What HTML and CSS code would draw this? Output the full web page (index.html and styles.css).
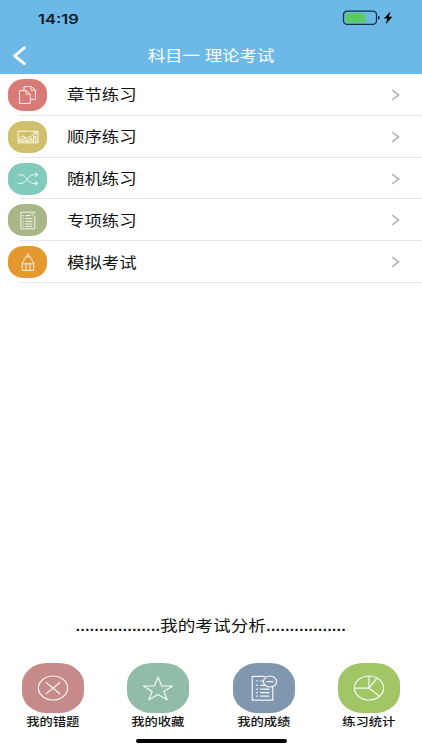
FILE: index.html
```
<!DOCTYPE html>
<html lang="zh-CN">
<head>
    <meta charset="UTF-8">
    <meta name="viewport" content="width=device-width, initial-scale=1.0">
    <title>科目一 理论考试</title>
    <link rel="stylesheet" href="styles.css">
</head>
<body>
    <header class="header">
        <div class="status-bar">
            <span class="time">14:19</span>
            <svg class="battery" width="52" height="16" viewBox="0 0 52 16">
                <rect x="1.5" y="1.2" width="33" height="13.2" rx="3.6" fill="none" stroke="#12303f" stroke-width="1.3"/>
                <rect x="3.5" y="3.2" width="20" height="9.2" rx="1.6" fill="#57cb60"/>
                <path d="M36 5.8q1.8.4 1.8 2t-1.8 2z" fill="#12303f"/>
                <path d="M48.4 1.6l-6.6 7h3.5l-1.6 5.6 6.8-7.4h-3.6z" fill="#000"/>
            </svg>
        </div>
        <div class="nav-bar">
            <svg class="back" width="15" height="20" viewBox="0 0 15 20">
                <path d="M12.3 1.8L2.6 9.8l9.7 7.8" fill="none" stroke="#fff" stroke-width="2.8" stroke-linecap="round" stroke-linejoin="round"/>
            </svg>
            <h1 class="title">科目一 理论考试</h1>
        </div>
    </header>

    <ul class="menu">
        <li class="menu-item">
            <span class="menu-icon red">
                <svg width="20" height="20" viewBox="0 0 20 20">
                    <path d="M6 5.4V1.6h7.4l4 3.4v9.4h-5M13.2 1.8v3.4h4M1.5 5.6h6.8l4 3.5v9.3H1.5zM8.2 5.8v3.4h4"/>
                </svg>
            </span>
            <span class="menu-text">章节练习</span>
            <svg class="arrow" width="9" height="12" viewBox="0 0 9 12"><path d="M1.2 1.2L7.6 6l-6.4 4.8"/></svg>
        </li>
        <li class="menu-item">
            <span class="menu-icon yellow">
                <svg width="22" height="14" viewBox="0 0 22 14">
                    <path d="M1 1.2h20v11.6H1zM2.5 12.5V9.6h2v2.9M6 12.5V8.4h2v4.1M9.5 12.5V10h2v2.5M13 12.5V8.4h2v4.1M16.8 12.5V6.2h2v6.3M2 8.2L6 6l4 2.4 4-2.2 5-3.8M16.6 2.4h2.8v2.4"/>
                </svg>
            </span>
            <span class="menu-text">顺序练习</span>
            <svg class="arrow" width="9" height="12" viewBox="0 0 9 12"><path d="M1.2 1.2L7.6 6l-6.4 4.8"/></svg>
        </li>
        <li class="menu-item">
            <span class="menu-icon teal">
                <svg width="22" height="14" viewBox="0 0 22 14">
                    <path d="M.8 2.8h3.4c5.4 0 6.6 8.6 12 8.6h4.4M.8 11.4h3.4c5.4 0 6.6-8.6 12-8.6h4.4M18 .6l2.8 2.2L18 5M18 9.2l2.8 2.2-2.8 2.2"/>
                </svg>
            </span>
            <span class="menu-text">随机练习</span>
            <svg class="arrow" width="9" height="12" viewBox="0 0 9 12"><path d="M1.2 1.2L7.6 6l-6.4 4.8"/></svg>
        </li>
        <li class="menu-item">
            <span class="menu-icon green">
                <svg width="18" height="19" viewBox="0 0 18 19">
                    <path d="M15.8 4.6v13.2H1.9V1.2h13.9M11.5 3l1.4 1.4 3.6-3.6M6.2 4.6h5M6.2 7.6h7.2M6.2 10.4h7.2M6.2 13h7.2M6.2 15.4h7.2M3.7 4.6h1.2M3.7 7.6h1.2M3.7 10.4h1.2M3.7 13h1.2M3.7 15.4h1.2"/>
                </svg>
            </span>
            <span class="menu-text">专项练习</span>
            <svg class="arrow" width="9" height="12" viewBox="0 0 9 12"><path d="M1.2 1.2L7.6 6l-6.4 4.8"/></svg>
        </li>
        <li class="menu-item">
            <span class="menu-icon orange">
                <svg width="14" height="20" viewBox="0 0 14 20">
                    <path d="M1.2 11L7 1.6l5.8 9.4v7.4H1.2zM5.2 4.8h3.6M1.2 11.2q1.9 2 3.8 0 2 2 4 0 1.9 2 3.8 0M5 12v6.2M9 12v6.2"/>
                </svg>
            </span>
            <span class="menu-text">模拟考试</span>
            <svg class="arrow" width="9" height="12" viewBox="0 0 9 12"><path d="M1.2 1.2L7.6 6l-6.4 4.8"/></svg>
        </li>
    </ul>

    <div class="analysis">
        <span class="dots">..................</span>
        <span class="analysis-text">我的考试分析</span>
        <span class="dots">.................</span>
    </div>

    <div class="tabs">
        <div class="tab">
            <span class="tab-icon rose">
                <svg width="32" height="26" viewBox="0 0 32 26">
                    <ellipse cx="16" cy="13" rx="14.6" ry="12"/>
                    <path d="M8.8 7.2l14.4 11.8M23.2 7.2L8.8 19"/>
                </svg>
            </span>
            <span class="tab-text">我的错题</span>
        </div>
        <div class="tab">
            <span class="tab-icon mint">
                <svg width="32" height="26" viewBox="0 0 32 26">
                    <path d="M16 2l3.6 8.8 11 .2-8.8 5.6 3.4 8.2L16 19.6l-9.2 5.2 3.4-8.2L1.4 11l11-.2z"/>
                </svg>
            </span>
            <span class="tab-text">我的收藏</span>
        </div>
        <div class="tab">
            <span class="tab-icon blue">
                <svg width="32" height="26" viewBox="0 0 32 26">
                    <path d="M17 1.4H4.2v23.8h20.6V12M12.4 6h3M12.4 10.4h5M12 14.2h9.4M12 17.6h9.4M12 21.2h9.4"/>
                    <path d="M8.2 6H10M8.2 10.4H10M8.2 14.2H10M8.2 17.6H10M8.2 21.2H10"/>
                    <ellipse cx="22" cy="6.6" rx="6.6" ry="5.4"/>
                    <path d="M18.6 6.6h6.8"/>
                </svg>
            </span>
            <span class="tab-text">我的成绩</span>
        </div>
        <div class="tab">
            <span class="tab-icon lime">
                <svg width="32" height="26" viewBox="0 0 32 26">
                    <ellipse cx="16" cy="13" rx="14.6" ry="12"/>
                    <path d="M16 1v12.2M1.4 13.2H16l7.6-9.6M16 13.2l10.6 8"/>
                </svg>
            </span>
            <span class="tab-text">练习统计</span>
        </div>
    </div>
    <div class="home-bar"></div>
</body>
</html>
```
FILE: styles.css
```
* {
    box-sizing: border-box;
}
body {
    display: flex;
    flex-direction: column;
    height: 750px;
    margin: 0;
    overflow: hidden;
    background-color: #fff;
    color: #111;
    font-family: "Liberation Sans", "Noto Sans CJK SC", sans-serif;
}
.header {
    height: 74px;
    background-color: #6cb9e8;
}
.status-bar {
    display: flex;
    justify-content: space-between;
    align-items: center;
    height: 36px;
    padding: 0 28px 0 38px;
}
.time {
    padding-top: 2px;
    color: #0b1a24;
    font-family: Inter, sans-serif;
    font-size: 13.5px;
    font-weight: 600;
    transform: scaleX(1.22);
    transform-origin: left;
}
.nav-bar {
    display: grid;
    grid-template-columns: 40px 1fr 40px;
    align-items: center;
    height: 38px;
    padding-top: 2px;
}
.back {
    margin-left: 12px;
}
.title {
    margin: 0;
    color: #fff;
    font-size: 15px;
    font-weight: normal;
    line-height: 20px;
    text-align: center;
    transform: scaleX(1.16);
}
.menu {
    margin: 0;
    padding: 0;
    list-style: none;
}
.menu-item {
    display: flex;
    align-items: center;
    height: 41.8px;
    padding: 0.4px 22px 0 8px;
    background: linear-gradient(#e6e6e6, #e6e6e6) 20px 100% / 100% 1px no-repeat;
}
.menu-icon {
    display: flex;
    justify-content: center;
    align-items: center;
    width: 39px;
    height: 32px;
    border-radius: 16px / 14px;
}
.menu-icon svg,
.tab-icon svg {
    fill: none;
    stroke: #fff;
    stroke-opacity: 0.85;
    stroke-linejoin: round;
}
.menu-icon svg {
    stroke-width: 1;
}
.menu-text {
    flex: 1;
    margin-left: 20px;
    padding-top: 0.6px;
    font-size: 15px;
    line-height: 20px;
    transform: scaleX(1.16);
    transform-origin: left;
}
.arrow {
    fill: none;
    stroke: #b5b5b5;
    stroke-width: 1.6;
}
.red { background-color: #d87a75; }
.yellow { background-color: #d0c06c; }
.teal { background-color: #80cbbb; }
.green { background-color: #a8b688; }
.orange { background-color: #e69830; }
.rose { background-color: #c58a89; }
.mint { background-color: #91bca8; }
.blue { background-color: #7f98b0; }
.lime { background-color: #a1c666; }
.analysis {
    display: flex;
    justify-content: center;
    align-items: center;
    margin-top: auto;
    height: 24px;
}
.analysis-text {
    width: 106px;
    font-size: 15.1px;
    line-height: 20px;
    white-space: nowrap;
    transform: scaleX(1.17);
    transform-origin: left;
}
.dots {
    font-size: 15px;
    font-weight: bold;
    letter-spacing: 0.53px;
}
.tabs {
    display: flex;
    height: 76px;
    margin-top: 25px;
}
.tab {
    display: flex;
    flex: 1;
    flex-direction: column;
    align-items: center;
}
.tab-icon {
    display: flex;
    justify-content: center;
    align-items: center;
    width: 62px;
    height: 50.5px;
    border-radius: 25px / 21px;
}
.tab-icon svg {
    stroke-width: 1.2;
    stroke-opacity: 0.9;
}
.tab-text {
    font-size: 11.4px;
    font-weight: 500;
    line-height: 18px;
    transform: scaleX(1.17);
}
.home-bar {
    align-self: center;
    width: 151px;
    height: 4.5px;
    margin-bottom: 7px;
    border-radius: 3px;
    background-color: #000;
}
```
